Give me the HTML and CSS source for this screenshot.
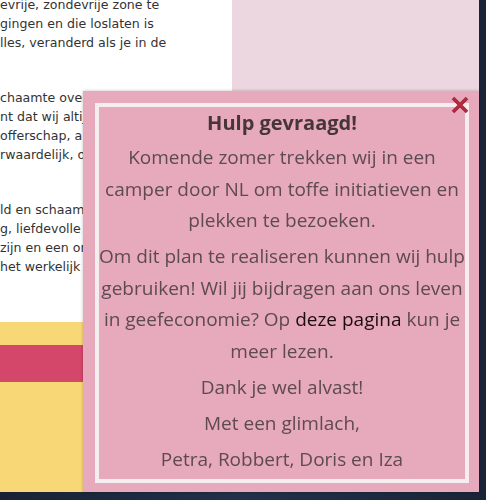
FILE: index.html
```html
<!DOCTYPE html>
<html lang="nl">
<head>
<meta charset="utf-8">
<title>Hulp gevraagd</title>
<link rel="stylesheet" href="styles.css">
</head>
<body>
<div class="page">
  <div class="main">
    <article class="article">
      <p>
        <span class="ln">evrije, zondevrije zone te</span>
        <span class="ln">gingen en die loslaten is</span>
        <span class="ln">lles, veranderd als je in de</span>
      </p>
      <p>
        <span class="ln">chaamte over ons heen,</span>
        <span class="ln">nt dat wij altijd goed</span>
        <span class="ln">offerschap, altijd maar</span>
        <span class="ln">rwaardelijk, of juist</span>
      </p>
      <p>
        <span class="ln">ld en schaamte. Een</span>
        <span class="ln">g, liefdevolle plek om</span>
        <span class="ln">zijn en een ontmoeting</span>
        <span class="ln">het werkelijk om gaat.</span>
      </p>
    </article>
    <aside class="sidebar"></aside>
  </div>
  <footer class="footer">
    <div class="footer-bar"></div>
  </footer>
</div>

<div class="modal" role="dialog" aria-labelledby="modal-title">
  <button class="close" type="button" aria-label="Sluiten">
    <svg viewBox="0 0 18 18" width="18" height="18" aria-hidden="true">
      <path d="M2 2 L16 16 M16 2 L2 16" stroke="#a8243a" stroke-width="3.6" stroke-linecap="butt" fill="none"/>
      <path d="M2.6 2.4 L15.6 15.4 M15.4 2.4 L2.4 15.4" stroke="#c23a4d" stroke-width="1.2" fill="none" opacity="0.6"/>
    </svg>
  </button>
  <div class="frame">
    <h2 id="modal-title" class="title">Hulp gevraagd!</h2>
    <p>Komende zomer trekken wij in een camper door NL om toffe initiatieven en plekken te bezoeken.</p>
    <p>Om dit plan te realiseren kunnen wij hulp gebruiken! Wil jij bijdragen aan ons leven in geefeconomie? Op <a href="#">deze pagina</a> kun je meer lezen.</p>
    <p>Dank je wel alvast!</p>
    <p>Met een glimlach,</p>
    <p>Petra, Robbert, Doris en Iza</p>
  </div>
</div>
</body>
</html>
```

FILE: styles.css
```css
html, body {
  margin: 0;
  padding: 0;
}

body {
  background: linear-gradient(90deg, #182234 0%, #22304a 50%, #1a2437 100%);
  background-color: #1d2a3f;
  height: 500px;
  overflow: hidden;
}

.page {
  width: 479px;
  display: flex;
  flex-direction: column;
}

.main {
  display: flex;
  height: 322px;
}

.article {
  width: 232px;
  background: #ffffff;
  overflow: hidden;
  font-family: "DejaVu Sans", Verdana, sans-serif;
  font-size: 12.6px;
  line-height: 19px;
  color: #333333;
}

.article p {
  margin: 0 0 36px;
}

.article p:first-child {
  margin-top: -5px;
}

.ln {
  display: block;
  white-space: nowrap;
}

.sidebar {
  flex: 1;
  background: #ecd6df;
}

.footer {
  height: 170px;
  background: #f8d876;
  padding-top: 23px;
  box-sizing: border-box;
}

.footer-bar {
  height: 37px;
  background: #d4466a;
}

.modal {
  position: fixed;
  left: 83px;
  top: 91px;
  width: 396px;
  height: 401px;
  box-sizing: border-box;
  padding: 12px 10px 9px 12px;
  background: #e7a9bc;
  box-shadow: 0 0 3px rgba(0, 0, 0, 0.25);
  display: flex;
  font-family: "Open Sans", "Liberation Sans", sans-serif;
  color: #5d4a53;
}

.close {
  position: absolute;
  top: 5px;
  right: 10px;
  width: 18px;
  height: 18px;
  padding: 0;
  border: 0;
  background: none;
  cursor: pointer;
}

.close svg {
  display: block;
}

.frame {
  flex: 1;
  border: 4px solid #f4eef1;
  text-align: center;
  padding-top: 2px;
}

.title {
  margin: 0 0 5px;
  font-size: 20px;
  line-height: 28px;
  font-weight: 700;
  color: #46353b;
}

.frame p {
  margin: 0 0 4.5px;
  font-size: 19px;
  line-height: 31.5px;
}

.frame a {
  color: #1c0c12;
  text-decoration: none;
}
```
